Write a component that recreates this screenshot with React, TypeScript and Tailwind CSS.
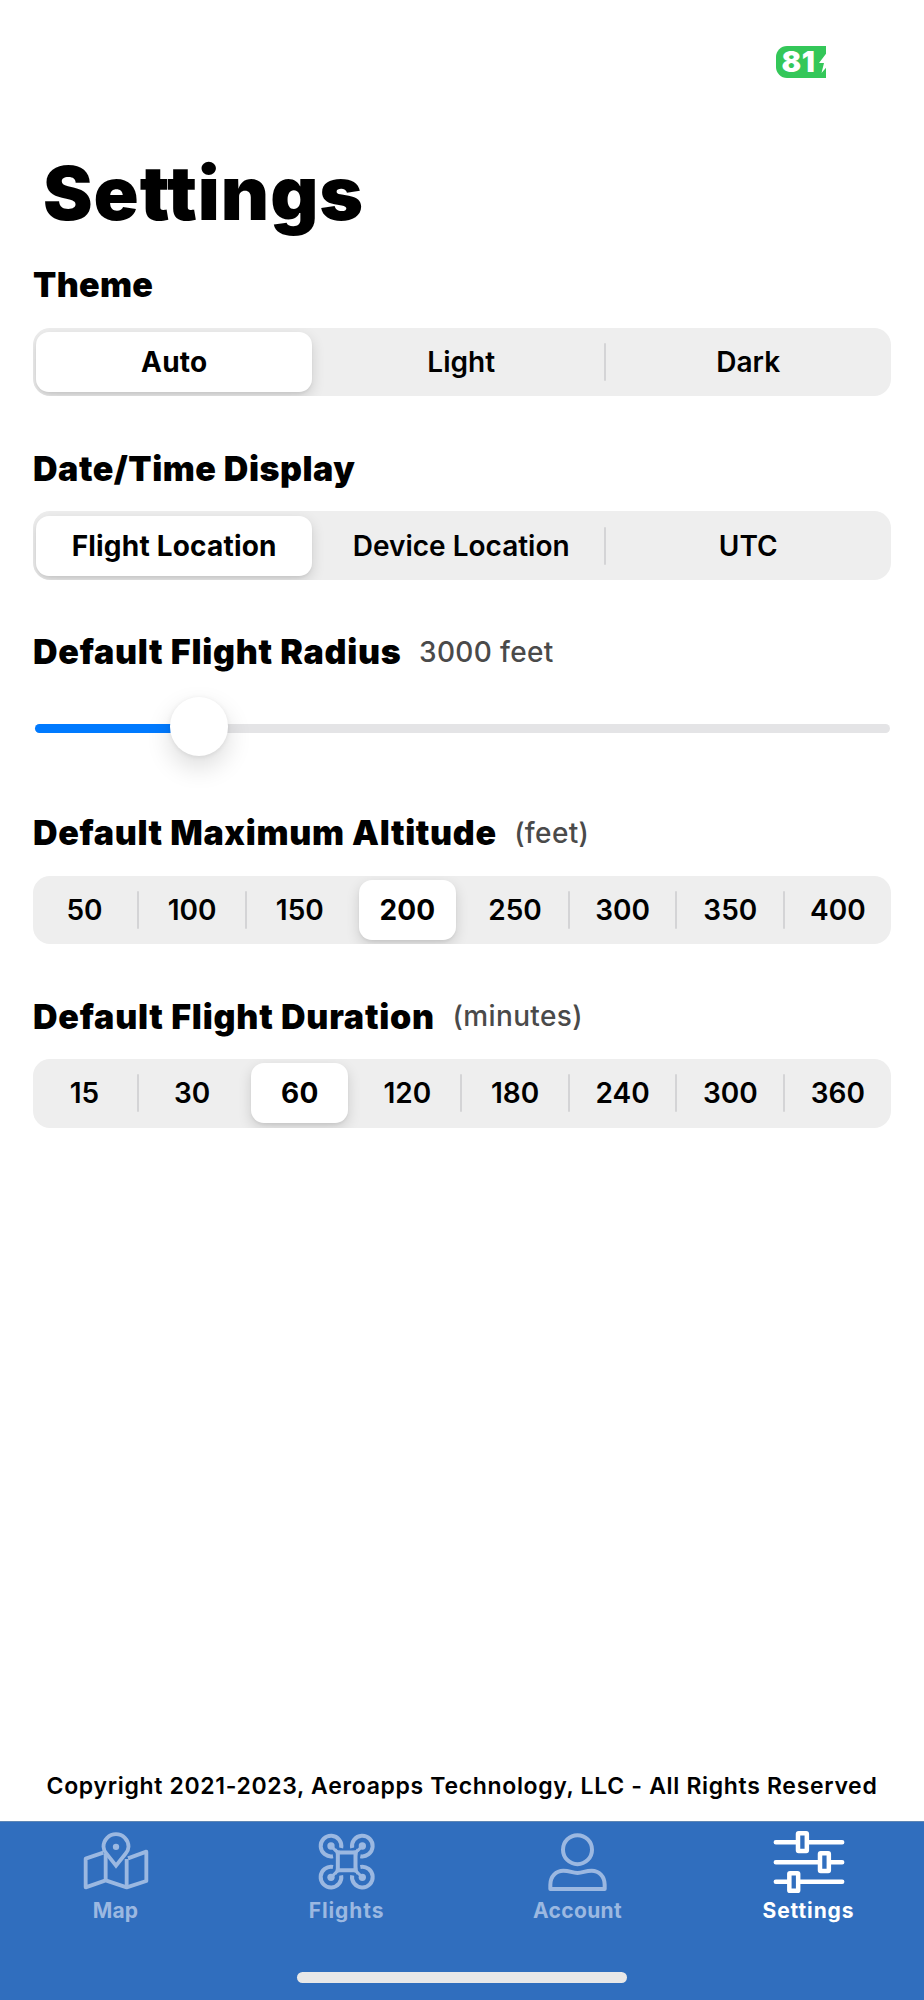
import { useState } from "react";
import type { ReactNode } from "react";

const THEMES = ["Auto", "Light", "Dark"];
const TIME_DISPLAYS = ["Flight Location", "Device Location", "UTC"];
const ALTITUDES = ["50", "100", "150", "200", "250", "300", "350", "400"];
const DURATIONS = ["15", "30", "60", "120", "180", "240", "300", "360"];

const MIN_RADIUS = 0;
const MAX_RADIUS = 17000;

export default function App() {
  const [theme, setTheme] = useState("Auto");
  const [timeDisplay, setTimeDisplay] = useState("Flight Location");
  const [radius] = useState(3000);
  const [altitude, setAltitude] = useState("200");
  const [duration, setDuration] = useState("60");
  const [tab, setTab] = useState("Settings");

  return (
    <div className="flex flex-col w-[924px] h-[2000px] bg-white text-black font-['Inter',sans-serif] overflow-hidden">
      <StatusBar />

      <main className="flex flex-col flex-1 px-[33px]">
        <h1 className="h-[90px] mb-[27.3px] pl-[10px] text-[74.5px] leading-[90px] font-black tracking-[0.95px]">Settings</h1>

        <Heading title="Theme" className="tracking-[0.3px]" />
        <Segmented options={THEMES} value={theme} onChange={setTheme} />

        <Heading title="Date/Time Display" className="tracking-[0.52px]" />
        <Segmented options={TIME_DISPLAYS} value={timeDisplay} onChange={setTimeDisplay} />

        <Heading title="Default Flight Radius" hint={`${radius} feet`} className="tracking-[0.72px]" />
        <RadiusSlider value={radius} />

        <Heading title="Default Maximum Altitude" hint="(feet)" className="tracking-[0.65px]" />
        <Segmented options={ALTITUDES} value={altitude} onChange={setAltitude} />

        <Heading title="Default Flight Duration" hint="(minutes)" className="tracking-[0.77px]" />
        <Segmented options={DURATIONS} value={duration} onChange={setDuration} />

        <p className="mt-auto mb-5 text-center text-[23px] leading-[30px] font-semibold tracking-[0.67px] whitespace-nowrap">
          Copyright 2021-2023, Aeroapps Technology, LLC - All Rights Reserved
        </p>
      </main>

      {/* Tab bar */}
      <nav className="flex flex-col h-[179px] bg-[#306ebe] border-t border-[#5e86b4]">
        <div className="flex">
          <TabItem label="Map" active={tab === "Map"} onClick={() => setTab("Map")} className="tracking-[0.2px]"><MapIcon /></TabItem>
          <TabItem label="Flights" active={tab === "Flights"} onClick={() => setTab("Flights")} className="tracking-[0.9px]"><DroneIcon /></TabItem>
          <TabItem label="Account" active={tab === "Account"} onClick={() => setTab("Account")} className="tracking-[0.35px]"><AccountIcon /></TabItem>
          <TabItem label="Settings" active={tab === "Settings"} onClick={() => setTab("Settings")} className="tracking-[0.9px]"><SlidersIcon /></TabItem>
        </div>
        <div className="mt-auto mb-[17px] mx-auto w-[330px] h-[11px] rounded-full bg-[#e8e8e8]" />
      </nav>
    </div>
  );
}

function StatusBar() {
  return (
    <div className="flex justify-end h-[148px] pt-[46px] pr-[98px]">
      <div className="flex items-center justify-between w-[50px] h-8 pl-[5.5px] rounded-l-[11px] bg-[#34c759] text-white">
        <span className="text-[29px] leading-8 font-black tracking-[0.6px]">81</span>
        {/* Bolt is cut by the right edge of the battery */}
        <svg viewBox="0 0 7.5 24" className="shrink-0 w-[7.5px] h-6 overflow-hidden" fill="currentColor">
          <path d="M9 1 L0 13 H5 L2.500 23 L14 9.500 H8 Z" />
        </svg>
      </div>
    </div>
  );
}

function Heading({ title, hint, className }: { title: string; hint?: string; className: string }) {
  return (
    <div className="flex items-center h-10 mb-[22.5px] gap-[17.5px] whitespace-nowrap">
      <h2 className={`text-[34px] leading-10 font-black ${className}`}>{title}</h2>
      {hint && <span className="text-[28px] leading-[39px] font-medium text-[#4a4a4a] tracking-[0.35px]">{hint}</span>}
    </div>
  );
}

function Segmented({ options, value, onChange }: { options: string[]; value: string; onChange: (v: string) => void }) {
  const selected = options.indexOf(value);
  return (
    <div className="h-[68.5px] mb-[52.5px] rounded-[17px] bg-[#eeeeee] overflow-hidden">
      <div className="flex h-full -ml-[2.3px] -mr-[0.7px]">
        {options.map((o, i) => {
          const divided = i < options.length - 1 && i !== selected && i + 1 !== selected;
          return (
            <div key={o} className="flex flex-1 basis-0 items-center">
              <button onClick={() => onChange(o)}
                className={`flex-1 h-[60px] ml-[5.5px] mr-[5.5px] rounded-[13px] text-[28px] whitespace-nowrap ${i === selected ? "bg-white font-bold tracking-[0.2px] shadow-[0_5px_14px_rgba(0,0,0,0.14),0_2px_3px_rgba(0,0,0,0.05)]" : "font-semibold"}`}>
                {o}
              </button>
              <span className={`w-[2px] h-[38px] -ml-px -mr-px rounded-full ${divided ? "bg-[#d4d4d6]" : ""}`} />
            </div>
          );
        })}
      </div>
    </div>
  );
}

function RadiusSlider({ value }: { value: number }) {
  const pct = ((value - MIN_RADIUS) / (MAX_RADIUS - MIN_RADIUS)) * 100;
  return (
    <div className="h-[118.4px] pt-[29.5px] px-[1.5px]">
      <div className="relative h-[9px] rounded-full bg-[#e4e4e6]">
        <div className="h-full rounded-full bg-[#007aff]" style={{ width: `${pct}%` }} />
        <div className="absolute top-[-27px] size-[58.5px] rounded-full bg-white shadow-[0_11px_26px_rgba(0,0,0,0.14),0_1px_5px_rgba(0,0,0,0.08)]"
          style={{ left: `calc(${pct}% - 15.5px)` }} />
      </div>
    </div>
  );
}

function TabItem({ label, active, onClick, className, children }: { label: string; active: boolean; onClick: () => void; className: string; children: ReactNode }) {
  return (
    <button onClick={onClick} className={`flex flex-col flex-1 items-center pt-[7px] ${active ? "text-white" : "text-[#9bb8e1]"}`}>
      {children}
      <span className={`mt-[3px] text-[21px] leading-[30px] font-bold ${className}`}>{label}</span>
    </button>
  );
}

function MapIcon() {
  return (
    <svg viewBox="60 42 216 192" className="w-[72px] h-16" fill="none" stroke="currentColor" strokeWidth="11.500" strokeLinejoin="round">
      <path d="M130 113 L77 131 V217 L137 196 L200 217 L259 198 V110 L204 130" />
      <path d="M137 116 V196 M200 132 V217" />
      <path d="M168 152 L139.500 116 Q130.500 105 130.500 95 A37.500 37.500 0 0 1 205.500 95 Q205.500 105 196.500 116 Z" strokeLinejoin="miter" />
      <circle cx="168" cy="95.500" r="9.500" fill="currentColor" stroke="none" />
    </svg>
  );
}

function DroneIcon() {
  return (
    <svg viewBox="63 42 216 192" className="w-[72px] h-16" fill="none" stroke="currentColor" strokeWidth="12">
      {/* Rotors */}
      <path d="M153.500 99 A31 31 0 1 0 129 123.500" />
      <path d="M186.500 99 A31 31 0 1 1 211 123.500" />
      <path d="M129 156 A31 31 0 1 0 153.500 181" />
      <path d="M211 156 A31 31 0 1 1 186.500 181" />
      {/* Body and arms */}
      <rect x="143.500" y="112.500" width="53" height="53" rx="2" />
      <path d="M123 93 L136 106 Q142 112 150 112 M217 93 L204 106 Q198 112 190 112 M123 187 L136 174 Q142 168 150 166 M217 187 L204 174 Q198 168 190 166" strokeWidth="9" />
      <path d="M136 104 Q143 111 143 122 M204 104 Q197 111 197 122 M136 176 Q143 168 143 157 M204 176 Q197 168 197 157" strokeWidth="9" />
      <g fill="currentColor" stroke="none">
        <circle cx="123" cy="93" r="11" />
        <circle cx="217" cy="93" r="11" />
        <circle cx="123" cy="187" r="11" />
        <circle cx="217" cy="187" r="11" />
      </g>
    </svg>
  );
}

function AccountIcon() {
  return (
    <svg viewBox="240 207 216 192" className="w-[72px] h-16" fill="none" stroke="currentColor" strokeWidth="12" strokeLinejoin="round">
      <circle cx="346.500" cy="269" r="43.500" />
      <path d="M265 387 V374 C265 349 282 332 304 332 C324 332 330 339 346.500 339 C363 339 369 332 389 332 C411 332 428 349 428 374 V387 Z" />
    </svg>
  );
}

function SlidersIcon() {
  return (
    <svg viewBox="99 42 216 192" className="w-[72px] h-16 overflow-visible" fill="none" stroke="currentColor" strokeWidth="13.500" strokeLinejoin="round" strokeLinecap="round">
      <path d="M107.500 82 H172 M202 82 H306.500 M107.500 141.500 H238 M268 141.500 H306.500 M107.500 200.500 H146 M176 200.500 H306.500" />
      <rect x="174" y="55" width="26.500" height="53" rx="2" />
      <rect x="240" y="115" width="26.500" height="53" rx="2" />
      <rect x="148" y="174.500" width="26.500" height="53" rx="2" />
    </svg>
  );
}
